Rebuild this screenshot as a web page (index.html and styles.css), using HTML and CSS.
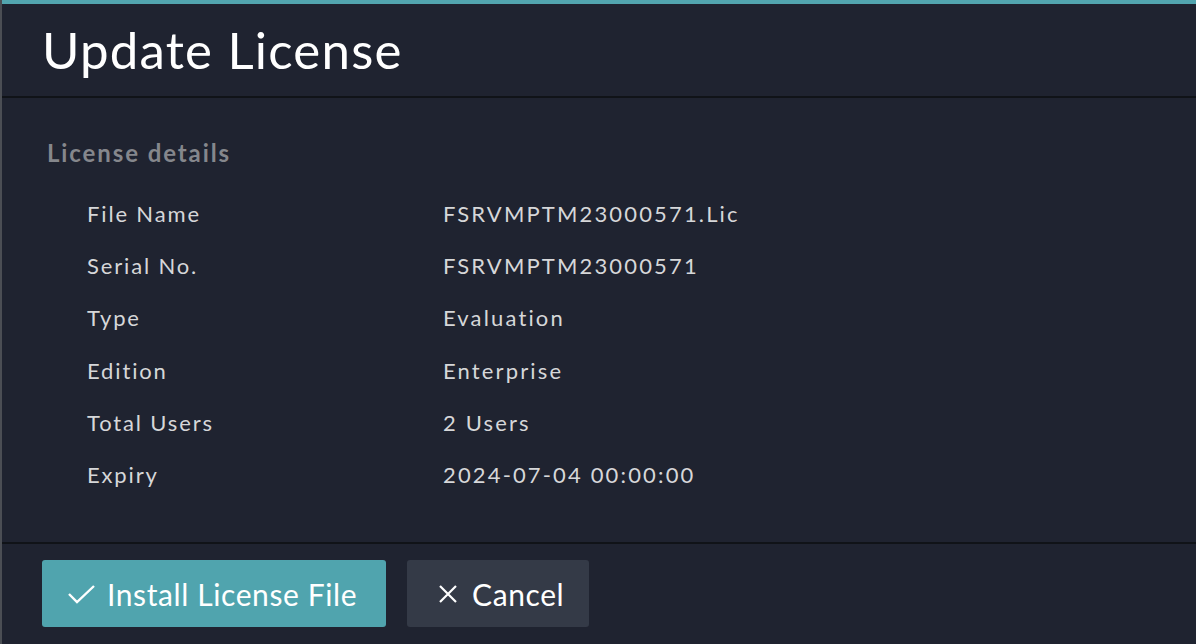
FILE: index.html
```html
<!DOCTYPE html>
<html>
<head>
<meta charset="utf-8">
<link rel="stylesheet" href="styles.css">
</head>
<body>
<div class="dialog">
  <div class="topbar"></div>
  <header class="header"><h1 class="title">Update License</h1></header>
  <main class="content">
    <h2 class="section">License details</h2>
    <div class="details">
      <div class="label">File Name</div><div class="value">FSRVMPTM23000571.Lic</div>
      <div class="label">Serial No.</div><div class="value">FSRVMPTM23000571</div>
      <div class="label">Type</div><div class="value">Evaluation</div>
      <div class="label">Edition</div><div class="value">Enterprise</div>
      <div class="label">Total Users</div><div class="value">2 Users</div>
      <div class="label">Expiry</div><div class="value">2024-07-04 00:00:00</div>
    </div>
  </main>
  <footer class="footer">
    <button class="btn btn-primary">
      <svg class="icon" width="30" height="22" viewBox="0 0 30 22"><path d="M2 11 L10 19 L27 3" fill="none" stroke="#fff" stroke-width="2.4"/></svg>
      <span>Install License File</span>
    </button>
    <button class="btn btn-secondary">
      <svg class="icon" width="20" height="20" viewBox="0 0 20 20"><path d="M2 2 L18 18 M18 2 L2 18" fill="none" stroke="#fff" stroke-width="2.2"/></svg>
      <span>Cancel</span>
    </button>
  </footer>
</div>
</body>
</html>
```
FILE: styles.css
```css
html, body {
  margin: 0;
  padding: 0;
  background: #1f2330;
  width: 1196px;
  height: 644px;
  overflow: hidden;
}
.dialog {
  height: 644px;
  display: flex;
  flex-direction: column;
  border-left: 2px solid #4b4e54;
  background: #1f2330;
  font-family: Lato, "Noto Sans", sans-serif;
  box-sizing: border-box;
}
.topbar {
  height: 4px;
  background: #52a5af;
}
.header {
  height: 94px;
  border-bottom: 2px solid #101318;
  display: flex;
  align-items: center;
  padding-left: 40px;
  box-sizing: border-box;
}
.title {
  margin: 0;
  font-size: 51px;
  font-weight: 400;
  color: #ffffff;
  letter-spacing: 1.2px;
  line-height: 1;
  padding-bottom: 1px;
}
.content {
  height: 446px;
  padding: 39px 0 0 45px;
  box-sizing: border-box;
  border-bottom: 2px solid #101318;
}
.section {
  margin: 0;
  font-size: 24px;
  font-weight: 700;
  color: #85878c;
  letter-spacing: 1.9px;
  line-height: 32px;
}
.details {
  display: grid;
  grid-template-columns: 356px auto;
  grid-auto-rows: 52.2px;
  margin-top: 30px;
  padding-left: 40px;
  font-size: 22px;
  color: #d6d7d9;
  letter-spacing: 1.85px;
}
.value {
  letter-spacing: 2.15px;
}
.label, .value {
  line-height: 30px;
}
.footer {
  flex: 1;
  display: flex;
  align-items: flex-start;
  gap: 21px;
  padding: 16px 0 0 40px;
}
.btn {
  height: 67px;
  border: none;
  border-radius: 3px;
  display: flex;
  align-items: center;
  font-family: Lato, "Noto Sans", sans-serif;
  font-size: 30px;
  color: #ffffff;
  letter-spacing: 0.6px;
  padding: 0;
}
.btn-primary {
  width: 344px;
  background: #50a4ae;
  padding-left: 25px;
  gap: 10px;
}
.btn-secondary {
  width: 182px;
  background: #343a47;
  padding-left: 31px;
  gap: 14px;
}
.icon {
  display: block;
}
```
